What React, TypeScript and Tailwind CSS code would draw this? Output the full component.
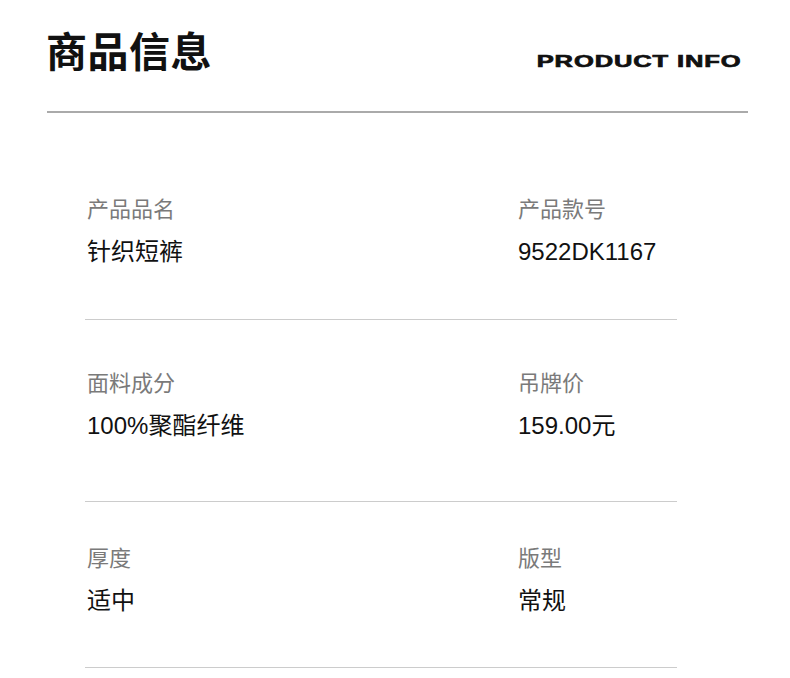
import React from "react";

const font = { fontFamily: '"Liberation Sans", "Noto Sans CJK SC", sans-serif' };

type Item = { label: string; value: string };

const rows: { items: [Item, Item]; pt: string; pb: string }[] = [
  {
    items: [
      { label: "产品品名", value: "针织短裤" },
      { label: "产品款号", value: "9522DK1167" },
    ],
    pt: "pt-[83px]",
    pb: "pb-[52px]",
  },
  {
    items: [
      { label: "面料成分", value: "100%聚酯纤维" },
      { label: "吊牌价", value: "159.00元" },
    ],
    pt: "pt-[50px]",
    pb: "pb-[60px]",
  },
  {
    items: [
      { label: "厚度", value: "适中" },
      { label: "版型", value: "常规" },
    ],
    pt: "pt-[43px]",
    pb: "pb-[51px]",
  },
];

function Cell({ item }: { item: Item }) {
  return (
    <div className="pl-[2px]">
      <div className="text-[22px] leading-[28px] text-[#7a7a7a]">{item.label}</div>
      <div className="mt-[13px] text-[24px] leading-[30px] text-[#111111]">{item.value}</div>
    </div>
  );
}

export default function App() {
  return (
    <div className="w-[790px] h-[678px] overflow-hidden bg-white" style={font}>
      <div className="pl-[46px] pr-[42px]">
        <div className="mt-[29px] flex h-[49px] items-center justify-between">
          <div className="text-[41px] leading-[49px] font-bold text-[#111111] tracking-[0.5px]">
            商品信息
          </div>
          <div className="mt-[17px] mr-[6px] origin-right scale-x-[1.5] text-[17px] leading-[20px] font-black tracking-[0.6px] text-[#111111] [-webkit-text-stroke:0.7px_#111111]">
            PRODUCT INFO
          </div>
        </div>
        <div className="mt-[33px] ml-[1px] h-[2px] bg-[#aaaaaa]" />
      </div>
      <div className="ml-[85px] w-[592px]">
        {rows.map((r, i) => (
          <div key={i} className={`${r.pt} ${r.pb} border-b border-[#cccccc]`}>
            <div className="grid grid-cols-[431px_1fr]">
              <Cell item={r.items[0]} />
              <Cell item={r.items[1]} />
            </div>
          </div>
        ))}
      </div>
    </div>
  );
}
